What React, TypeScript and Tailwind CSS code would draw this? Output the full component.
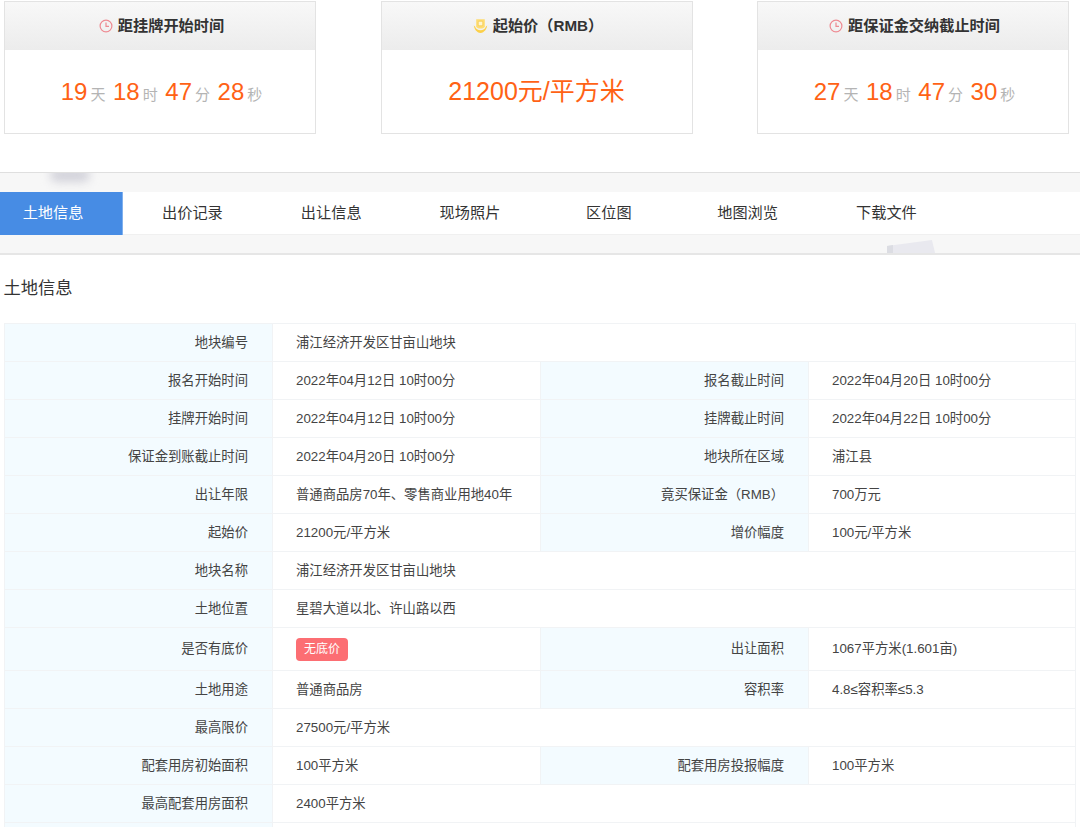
import React from "react";

const FONT = "font-['Liberation_Sans','Noto_Sans_CJK_SC',sans-serif]";

function ClockIcon() {
  return (
    <svg width="14" height="14" viewBox="0 0 14 14" fill="none" className="shrink-0">
      <circle cx="7" cy="7" r="5.9" stroke="#ee8a92" strokeWidth="1.2" />
      <path d="M7 3.6V7.4H10" stroke="#ee8a92" strokeWidth="1.2" />
    </svg>
  );
}

function CoinIcon() {
  return (
    <svg width="15" height="16" viewBox="0 0 15 16" fill="none" className="shrink-0">
      <path d="M3.2 1.2H11.8V8.2C11.8 9.6 9.6 10.6 7.5 10.6C5.4 10.6 3.2 9.6 3.2 8.2Z" fill="#fedd72" />
      <rect x="5.2" y="3.2" width="4.6" height="4.6" rx="0.8" fill="#fff6cf" stroke="#f6c544" strokeWidth="0.7" />
      <path d="M0.8 7.5C1.2 11 3.6 14.6 7.5 15C11.4 14.6 13.8 11 14.2 7.5L12.8 8.8C12.4 10.8 10 12.2 7.5 12.2C5 12.2 2.6 10.8 2.2 8.8Z" fill="#fcd048" />
    </svg>
  );
}

function Num({ n, u, last }: { n: string; u: string; last?: boolean }) {
  return (
    <span className="inline-flex items-baseline">
      <span className="text-[24px] text-[#ff6215]">{n}</span>
      <span className={last ? "ml-[3px] text-[15px] text-[#b4b4b4]" : "ml-[3px] mr-[7.6px] text-[15px] text-[#b4b4b4]"}>{u}</span>
    </span>
  );
}

function Card({ icon, title, children }: { icon: React.ReactNode; title: string; children: React.ReactNode }) {
  return (
    <div className="h-[133px] w-[312px] border border-[#e3e3e3] bg-white">
      <div className="flex h-[48px] items-center justify-center gap-[5px] bg-gradient-to-b from-[#f8f8f8] to-[#ececec] pl-[3px] text-[15.2px] font-bold text-[#333]">
        {icon}
        <span className="whitespace-pre">{title}</span>
      </div>
      <div className="flex h-[83px] items-center justify-center">{children}</div>
    </div>
  );
}

const TABS = ["土地信息", "出价记录", "出让信息", "现场照片", "区位图", "地图浏览", "下载文件"];

function L({ children }: { children?: React.ReactNode }) {
  return <td className="border border-[#f1f3f5] bg-[#f3fbff] pr-[24px] text-right align-middle">{children}</td>;
}
function V({ children, span }: { children?: React.ReactNode; span?: number }) {
  return (
    <td colSpan={span} className="border border-[#f1f3f5] bg-white pl-[23px] text-left align-middle">
      {children}
    </td>
  );
}

type Row = [string, React.ReactNode, string?, React.ReactNode?];

const ROWS: Row[] = [
  ["地块编号", "浦江经济开发区甘亩山地块"],
  ["报名开始时间", "2022年04月12日 10时00分", "报名截止时间", "2022年04月20日 10时00分"],
  ["挂牌开始时间", "2022年04月12日 10时00分", "挂牌截止时间", "2022年04月22日 10时00分"],
  ["保证金到账截止时间", "2022年04月20日 10时00分", "地块所在区域", "浦江县"],
  ["出让年限", "普通商品房70年、零售商业用地40年", "竟买保证金（RMB）", "700万元"],
  ["起始价", "21200元/平方米", "增价幅度", "100元/平方米"],
  ["地块名称", "浦江经济开发区甘亩山地块"],
  ["土地位置", "星碧大道以北、许山路以西"],
  [
    "是否有底价",
    <span className="inline-flex h-[23px] w-[52px] items-center justify-center rounded-[4px] bg-[#fc6e73] text-[12px] text-white">无底价</span>,
    "出让面积",
    "1067平方米(1.601亩)",
  ],
  ["土地用途", "普通商品房", "容积率", "4.8≤容积率≤5.3"],
  ["最高限价", "27500元/平方米"],
  ["配套用房初始面积", "100平方米", "配套用房投报幅度", "100平方米"],
  ["最高配套用房面积", "2400平方米"],
  ["", ""],
];

export default function App() {
  return (
    <div className={`${FONT} relative h-[827px] w-[1080px] overflow-hidden bg-white`}>
      <div className="flex justify-between pl-[4px] pr-[11px] pt-[1px]">
        <Card icon={<ClockIcon />} title="距挂牌开始时间">
          <span className="flex pl-[3px]">
            <Num n="19" u="天" />
            <Num n="18" u="时" />
            <Num n="47" u="分" />
            <Num n="28" u="秒" last />
          </span>
        </Card>
        <Card icon={<CoinIcon />} title="起始价（RMB）">
          <span className="text-[25px] text-[#ff6215]">21200元/平方米</span>
        </Card>
        <Card icon={<ClockIcon />} title="距保证金交纳截止时间">
          <span className="flex pl-[3px]">
            <Num n="27" u="天" />
            <Num n="18" u="时" />
            <Num n="47" u="分" />
            <Num n="30" u="秒" last />
          </span>
        </Card>
      </div>

      <div className="relative mt-[38px] overflow-hidden border-t border-b-2 border-t-[#dfdfdf] border-b-[#e6e6e6] bg-[#f7f7f7] pb-[18px] pt-[19px]">
        <div className="absolute left-[50px] top-[-5px] h-[14px] w-[40px] rounded-full bg-[#d2d2da] blur-[5px]" />
        <svg className="absolute left-[887px] top-[67px]" width="48" height="13" viewBox="0 0 48 13">
          <polygon points="0,6 45,0 48,13 0,13" fill="#e9e9ef" />
          <polygon points="0,6 6,5 6,13 0,13" fill="#dcdde3" />
        </svg>
        <div className="relative flex h-[43px] border-b border-b-[#f0f0f0] bg-white">
          {TABS.map((t, i) => (
            <div
              key={t}
              className={
                i === 0
                  ? "-mb-[1px] -ml-[16px] flex w-[139px] items-center justify-center border-r border-r-[#7fb0ee] bg-[#478ce4] text-[15.2px] text-white"
                  : "flex w-[138.8px] items-center justify-center text-[15.2px] text-[#333]"
              }
            >
              {t}
            </div>
          ))}
        </div>
      </div>

      <h2 className="pl-[3.5px] pt-[21px] text-[17.3px] font-normal leading-[24px] text-[#333]">土地信息</h2>

      <table className="ml-[4px] mt-[23px] w-[1071px] table-fixed border-collapse text-[13.33px] text-[#444]">
        <colgroup>
          <col className="w-[268px]" />
          <col className="w-[268px]" />
          <col className="w-[268px]" />
          <col className="w-[267px]" />
        </colgroup>
        <tbody>
          {ROWS.map((r, i) => (
            <tr key={i} className={i === 8 ? "h-[43px]" : "h-[38px]"}>
              <L>{r[0]}</L>
              {r[2] ? (
                <>
                  <V>{r[1]}</V>
                  <L>{r[2]}</L>
                  <V>{r[3]}</V>
                </>
              ) : (
                <V span={3}>{r[1]}</V>
              )}
            </tr>
          ))}
        </tbody>
      </table>
    </div>
  );
}
